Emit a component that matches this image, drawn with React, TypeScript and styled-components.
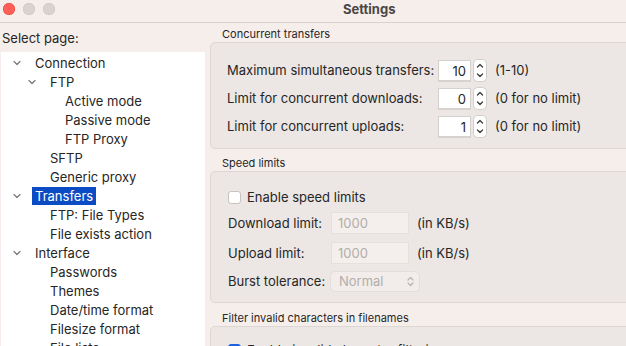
import styled, { createGlobalStyle } from 'styled-components';

const GlobalStyle = createGlobalStyle`
    html, body {
        margin: 0;
        padding: 0;
        background: #f6eeeb;
    }
    body {
        font-family: Inter, "Noto Sans", sans-serif;
        font-size: 13px;
        color: #262626;
    }
`

const Window = styled.div`
    width: 626px;
    height: 346px;
    overflow: hidden;
    background: #f6eeeb;
    display: flex;
    flex-direction: column;
`

const TitleBar = styled.header`
    height: 23px;
    flex: 0 0 23px;
    box-sizing: border-box;
    border-bottom: 1px solid #d9d1ce;
    display: flex;
    align-items: center;
    padding: 0 0 5px 3px;
    > h1 {
        margin: 0 0 0 288px;
        font-size: 13px;
        line-height: 18px;
        font-weight: 700;
        color: #4a4645;
    }
`

const Lights = styled.div`
    display: flex;
    gap: 8px;
`

const Light = styled.span<{ $color: string; $edge: string }>`
    width: 12px;
    height: 12px;
    border-radius: 50%;
    background: ${p => p.$color};
    box-shadow: inset 0 0 0 0.5px ${p => p.$edge};
`

const Body = styled.div`
    flex: 1;
    display: flex;
    min-height: 0;
`

const Sidebar = styled.nav`
    width: 205px;
    flex: 0 0 205px;
    display: flex;
    flex-direction: column;
    > label {
        height: 29px;
        line-height: 30px;
        padding-left: 2px;
        font-size: 13px;
        color: #262626;
    }
`

const Tree = styled.ul`
    flex: 1;
    margin: 0 0 0 1px;
    padding: 1px 0 0;
    list-style: none;
    background: #ffffff;
`

const Row = styled.li<{ $level: number }>`
    height: 19px;
    display: flex;
    align-items: center;
    padding-left: ${p => 12 + (p.$level - 1) * 15}px;
`

const Toggle = styled.span`
    width: 22px;
    flex: 0 0 22px;
    display: flex;
    align-items: center;
`

const Label = styled.span<{ $selected?: boolean }>`
    padding: 0 3px;
    margin-left: -3px;
    line-height: 18px;
    white-space: nowrap;
    color: ${p => (p.$selected ? '#ffffff' : '#262626')};
    background: ${p => (p.$selected ? '#0b4cc4' : 'transparent')};
`

const Content = styled.main`
    flex: 1;
    padding-left: 5px;
    overflow: hidden;
`

const SectionTitle = styled.h2<{ $top: number }>`
    margin: 0 0 1px;
    padding: ${p => p.$top}px 0 0 12px;
    height: 14px;
    box-sizing: content-box;
    font-size: 11px;
    line-height: 14px;
    font-weight: 400;
    color: #262626;
    white-space: nowrap;
`

const Group = styled.section<{ $pad: string }>`
    width: 440px;
    padding: ${p => p.$pad};
    border: 1px solid #ddd7d4;
    border-radius: 5px;
    background: #ece7e4;
    display: flex;
    flex-direction: column;
`

const FormRow = styled.div<{ $gap?: number; $label?: number }>`
    display: flex;
    align-items: center;
    height: 22px;
    margin-top: ${p => p.$gap ?? 0}px;
    > label {
        width: ${p => p.$label ?? 211}px;
        white-space: nowrap;
    }
`

const NumberBox = styled.div`
    width: 33px;
    height: 21px;
    box-sizing: border-box;
    background: #ffffff;
    border: 1px solid #d6d1ce;
    box-shadow: 0 0.5px 0 #c7c1be;
    text-align: right;
    padding-right: 4px;
    line-height: 20px;
    font-size: 13px;
`

const Stepper = styled.span`
    margin-left: 2px;
    display: flex;
`

const Hint = styled.span<{ $left: number }>`
    margin-left: ${p => p.$left}px;
    white-space: nowrap;
`

const TextBox = styled.div`
    width: 78px;
    height: 22px;
    box-sizing: border-box;
    background: #f4efec;
    border: 1px solid #e6e0dd;
    padding-left: 6px;
    line-height: 20px;
    color: #b3adaa;
`

const Select = styled.div`
    width: 90px;
    height: 21px;
    box-sizing: border-box;
    border: 1px solid #e3dedb;
    border-radius: 5px;
    background: #f2edea;
    display: flex;
    align-items: center;
    justify-content: space-between;
    padding: 0 4px 0 8px;
    color: #b3adaa;
`

const Check = styled.span<{ $on?: boolean }>`
    width: 13px;
    height: 13px;
    box-sizing: border-box;
    border-radius: 3px;
    border: 1px solid ${p => (p.$on ? '#1a62e0' : '#c9c3c0')};
    background: ${p => (p.$on ? '#1a62e0' : '#ffffff')};
    margin: 0 6px 0 0;
`

function Chevron() {
    return (
        <svg width="8" height="6" viewBox="0 0 8 6">
            <path d="M1 1.5 L4 4.5 L7 1.5" fill="none" stroke="#7c7876" strokeWidth="1.2" strokeLinecap="round" strokeLinejoin="round" />
        </svg>
    )
}

function StepperIcon() {
    return (
        <svg width="14" height="23" viewBox="0 0 14 23">
            <rect x="0.5" y="0.5" width="13" height="22" rx="4" fill="#ffffff" stroke="#d2ccc9" />
            <path d="M4.5 8 L7 5.5 L9.5 8" fill="none" stroke="#3c3a39" strokeWidth="1.3" strokeLinecap="round" strokeLinejoin="round" />
            <path d="M4.5 15 L7 17.5 L9.5 15" fill="none" stroke="#3c3a39" strokeWidth="1.3" strokeLinecap="round" strokeLinejoin="round" />
        </svg>
    )
}

function UpDown() {
    return (
        <svg width="9" height="13" viewBox="0 0 9 13">
            <path d="M2 5 L4.5 2.5 L7 5" fill="none" stroke="#b9b3b0" strokeWidth="1.2" strokeLinecap="round" strokeLinejoin="round" />
            <path d="M2 8 L4.5 10.5 L7 8" fill="none" stroke="#b9b3b0" strokeWidth="1.2" strokeLinecap="round" strokeLinejoin="round" />
        </svg>
    )
}

const pages: { name: string; level: number; open?: boolean; selected?: boolean }[] = [
    { name: 'Connection', level: 1, open: true },
    { name: 'FTP', level: 2, open: true },
    { name: 'Active mode', level: 3 },
    { name: 'Passive mode', level: 3 },
    { name: 'FTP Proxy', level: 3 },
    { name: 'SFTP', level: 2 },
    { name: 'Generic proxy', level: 2 },
    { name: 'Transfers', level: 1, open: true, selected: true },
    { name: 'FTP: File Types', level: 2 },
    { name: 'File exists action', level: 2 },
    { name: 'Interface', level: 1, open: true },
    { name: 'Passwords', level: 2 },
    { name: 'Themes', level: 2 },
    { name: 'Date/time format', level: 2 },
    { name: 'Filesize format', level: 2 },
    { name: 'File lists', level: 2 },
]

const limits = [
    { label: 'Maximum simultaneous transfers:', value: '10', hint: '(1-10)' },
    { label: 'Limit for concurrent downloads:', value: '0', hint: '(0 for no limit)' },
    { label: 'Limit for concurrent uploads:', value: '1', hint: '(0 for no limit)' },
]

export default function App() {
    return (
        <Window>
            <GlobalStyle />
            <TitleBar>
                <Lights>
                    <Light $color="#fe5f57" $edge="#e0443e" />
                    <Light $color="#d9d3d0" $edge="#c8c2bf" />
                    <Light $color="#d9d3d0" $edge="#c8c2bf" />
                </Lights>
                <h1>Settings</h1>
            </TitleBar>
            <Body>
                <Sidebar>
                    <label>Select page:</label>
                    <Tree>
                        {pages.map(page => (
                            <Row key={page.name} $level={page.level}>
                                <Toggle>{page.open && <Chevron />}</Toggle>
                                <Label $selected={page.selected}>{page.name}</Label>
                            </Row>
                        ))}
                    </Tree>
                </Sidebar>
                <Content>
                    <SectionTitle $top={4}>Concurrent transfers</SectionTitle>
                    <Group $pad="16px 0 11px 16px">
                        {limits.map((row, i) => (
                            <FormRow key={row.label} $gap={i ? 6 : 0}>
                                <label>{row.label}</label>
                                <NumberBox>{row.value}</NumberBox>
                                <Stepper><StepperIcon /></Stepper>
                                <Hint $left={8}>{row.hint}</Hint>
                            </FormRow>
                        ))}
                    </Group>
                    <SectionTitle $top={7}>Speed limits</SectionTitle>
                    <Group $pad="14px 0 10px 17px">
                        <FormRow $label={0}>
                            <Check />
                            <span>Enable speed limits</span>
                        </FormRow>
                        <FormRow $gap={4} $label={103}>
                            <label>Download limit:</label>
                            <TextBox>1000</TextBox>
                            <Hint $left={8}>(in KB/s)</Hint>
                        </FormRow>
                        <FormRow $gap={8} $label={103}>
                            <label>Upload limit:</label>
                            <TextBox>1000</TextBox>
                            <Hint $left={8}>(in KB/s)</Hint>
                        </FormRow>
                        <FormRow $gap={6} $label={102}>
                            <label>Burst tolerance:</label>
                            <Select>
                                <span>Normal</span>
                                <UpDown />
                            </Select>
                        </FormRow>
                    </Group>
                    <SectionTitle $top={8}>Filter invalid characters in filenames</SectionTitle>
                    <Group $pad="12px 0 20px 17px">
                        <FormRow $label={0}>
                            <Check $on />
                            <span>Enable invalid character filtering</span>
                        </FormRow>
                    </Group>
                </Content>
            </Body>
        </Window>
    )
}
